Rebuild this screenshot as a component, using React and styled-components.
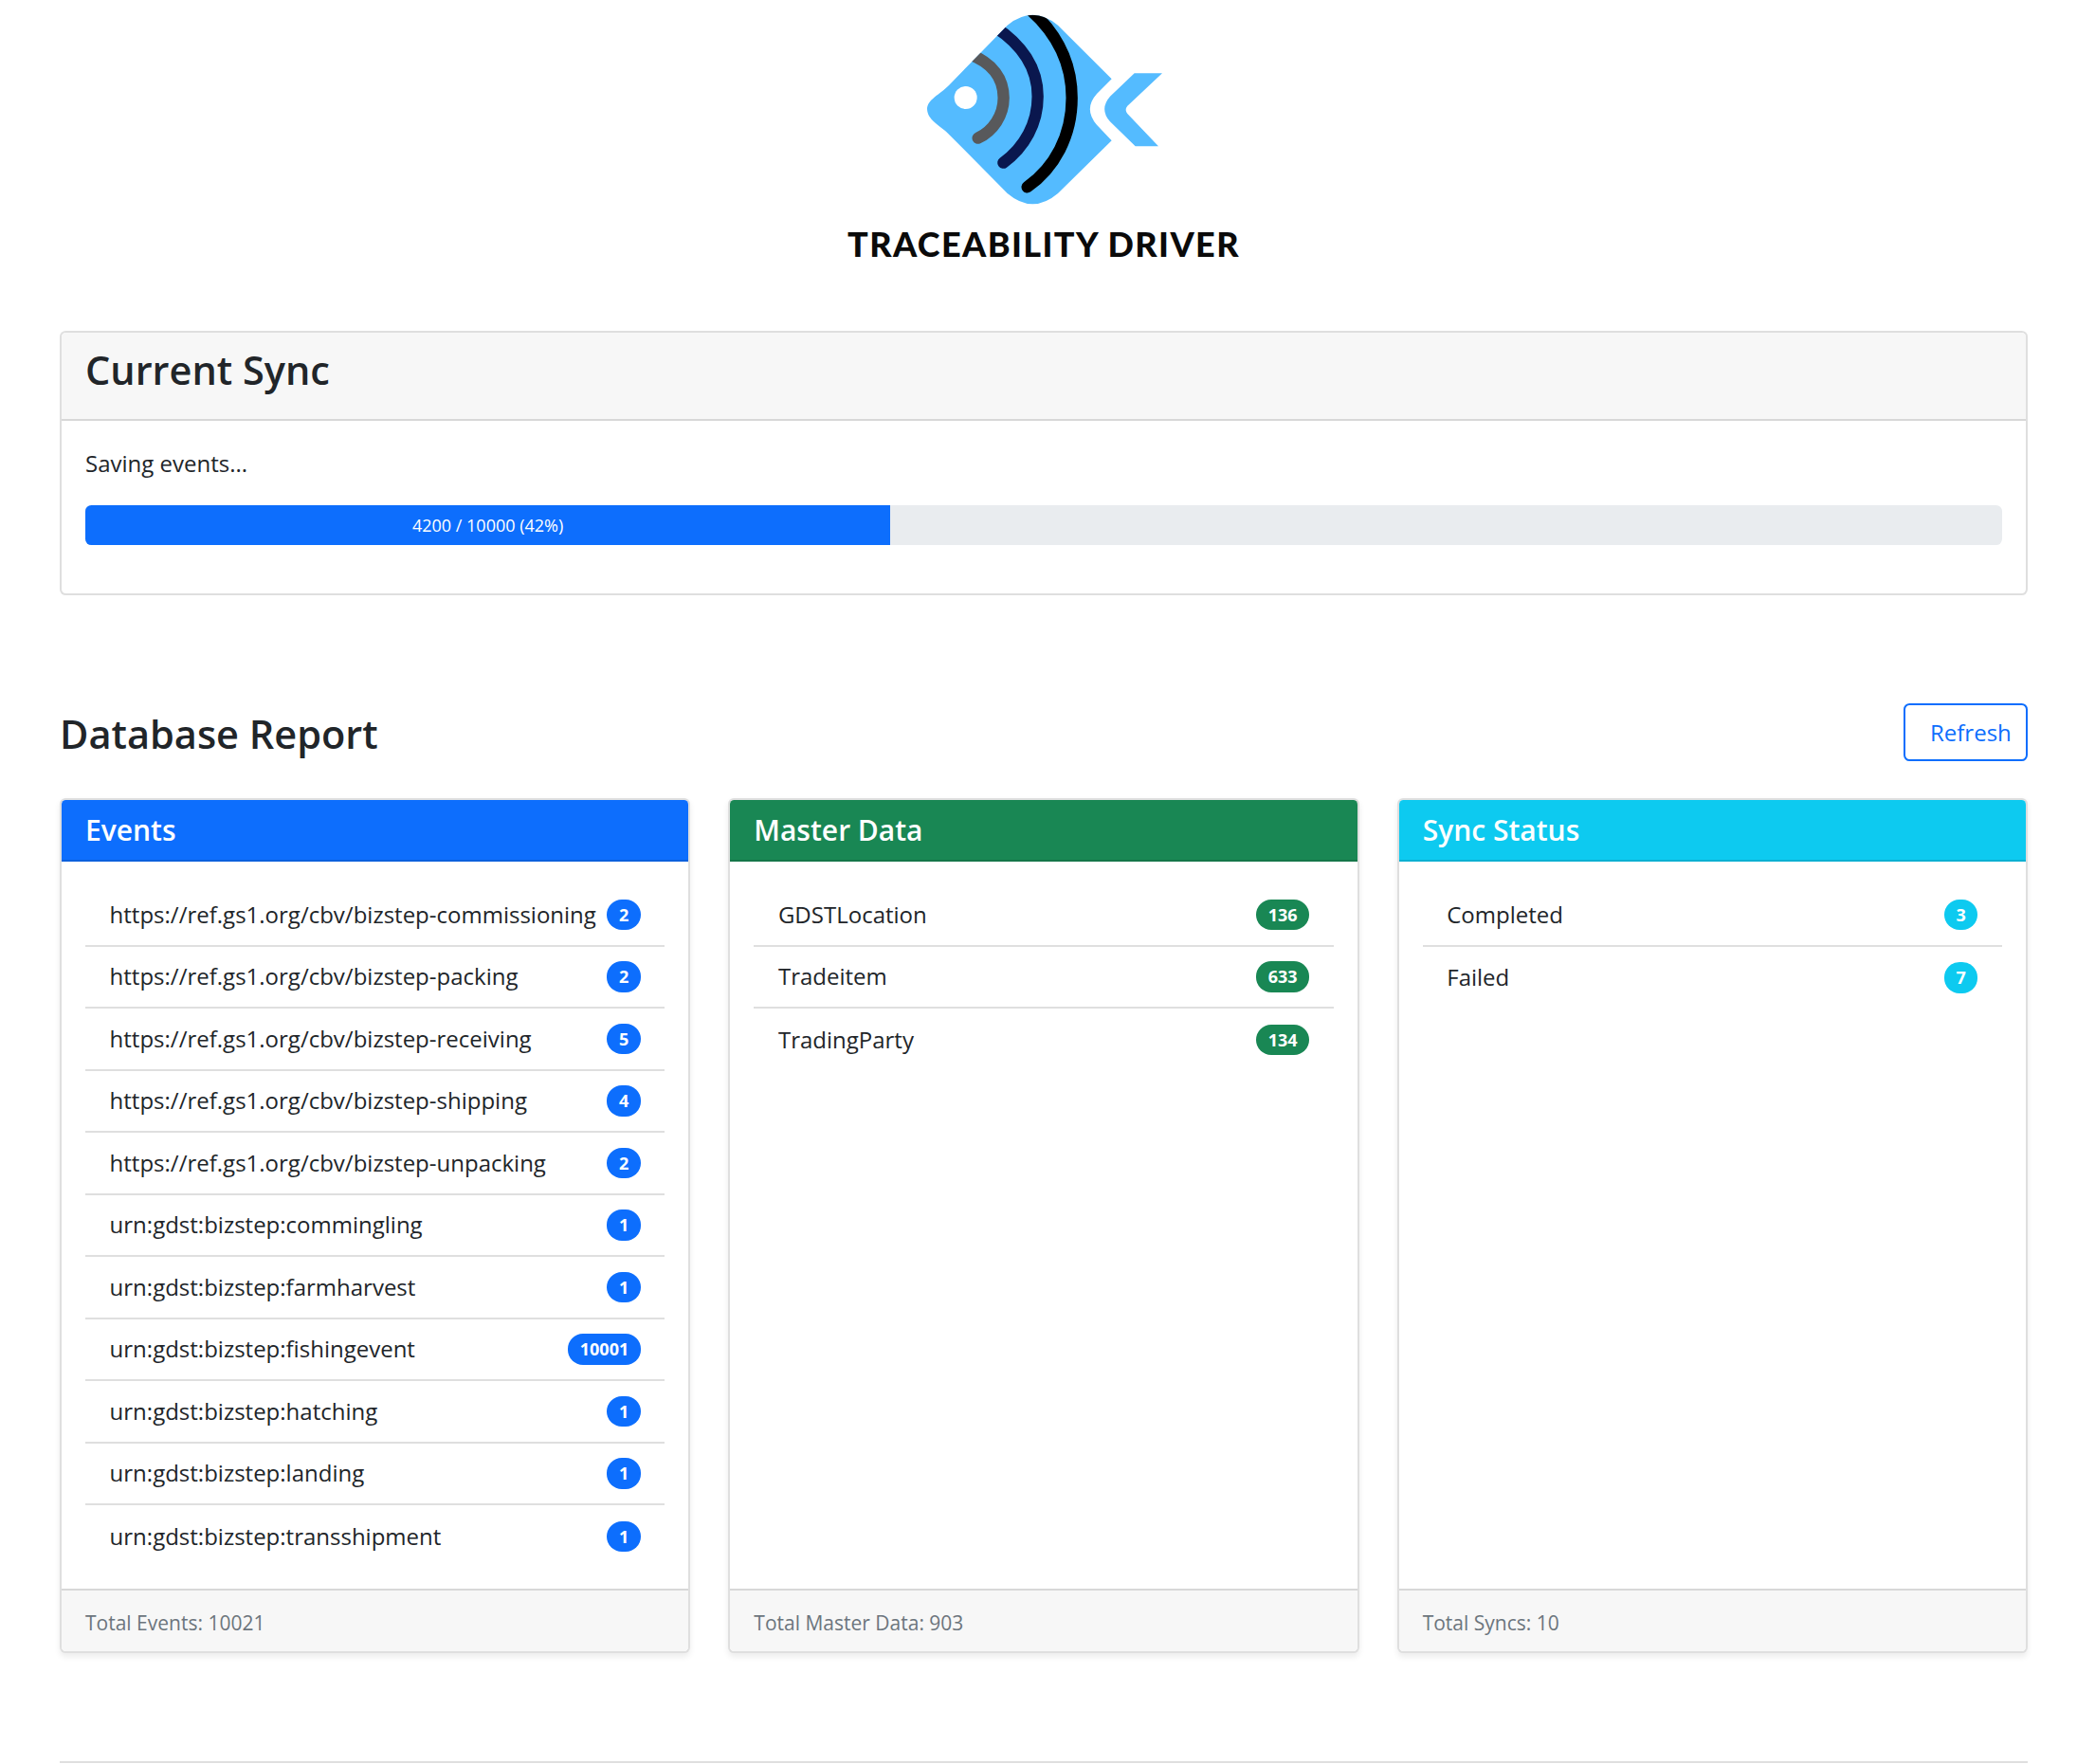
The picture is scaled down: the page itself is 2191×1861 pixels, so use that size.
import React from 'react';
import styled, { createGlobalStyle } from 'styled-components';

const GlobalStyle = createGlobalStyle`
  html, body {
    margin: 0;
    padding: 0;
    background: #fff;
    color: #212529;
    font-family: "Open Sans", "Liberation Sans", sans-serif;
    font-size: 24px;
    line-height: 38.4px;
  }
  * { box-sizing: border-box; }
`;

const Page = styled.div`
  padding: 0 52px 0 63px;
`;

// ******************* LOGO **********************
const LogoBlock = styled.header`
  display: flex;
  flex-direction: column;
  align-items: center;
  margin-bottom: 65px;
`;

const LogoMark = styled.svg`
  display: block;
  width: 440px;
  height: 230px;
`;

const LogoWord = styled.div`
  font-family: Lato, "Liberation Sans", sans-serif;
  font-weight: 900;
  font-size: 36px;
  line-height: 54px;
  letter-spacing: 1.4px;
  color: #0a0a0a;
`;

// ******************* CARDS **********************
const Card = styled.section`
  display: flex;
  flex-direction: column;
  background: #fff;
  border: 2px solid rgba(0, 0, 0, 0.125);
  border-radius: 6.4px;
  box-shadow: ${(p) => (p.$raised ? '0 3.2px 6.4px rgba(0, 0, 0, 0.075)' : 'none')};
  overflow: hidden;
`;

const SyncHeader = styled.div`
  background: #f7f7f7;
  border-bottom: 2px solid rgba(0, 0, 0, 0.125);
  padding: 12.8px 25px 11.8px;
`;

const SyncTitle = styled.h3`
  margin: 0 0 12.8px;
  font-size: 41.5px;
  line-height: 53.8px;
  font-weight: 600;
`;

const SyncBody = styled.div`
  padding: 25.6px 25px 51.2px;
`;

const SyncText = styled.p`
  margin: 0 0 25px;
`;

const Progress = styled.div`
  display: flex;
  height: 42px;
  background: #e9ecef;
  border-radius: 6.4px;
  overflow: hidden;
`;

const ProgressFill = styled.div`
  display: flex;
  align-items: center;
  justify-content: center;
  background: #0d6efd;
  color: #fff;
  font-size: 18px;
`;

// ******************* REPORT **********************
const ReportHead = styled.div`
  display: flex;
  justify-content: space-between;
  align-items: center;
  margin: 114px 0 39px;
`;

const ReportTitle = styled.h2`
  margin: 0;
  padding-top: 4px;
  font-size: 41.5px;
  line-height: 57px;
  font-weight: 600;
`;

const RefreshButton = styled.button`
  height: 61px;
  width: 131px;
  padding: 0 20px 0 26px;
  background: #fff;
  color: #0d6efd;
  border: 2px solid #0d6efd;
  border-radius: 6.4px;
  font: inherit;
  white-space: nowrap;
`;

const Columns = styled.div`
  display: grid;
  grid-template-columns: repeat(3, 1fr);
  gap: 40px;
`;

const ColumnHeader = styled.div`
  background: ${(p) => p.$color};
  color: #fff;
  border-bottom: 2px solid rgba(0, 0, 0, 0.125);
  padding: 12.8px 25px 11.8px;
  font-size: 30px;
  line-height: 38.4px;
  font-weight: 600;
`;

const ColumnBody = styled.div`
  flex: 1;
  padding: 24px 25px 22px;
`;

const List = styled.ul`
  list-style: none;
  margin: 0;
  padding: 0;
`;

const Row = styled.li`
  display: flex;
  justify-content: space-between;
  align-items: center;
  height: 65.5px;
  padding: 0 25.6px;
  border-bottom: 2px solid rgba(0, 0, 0, 0.125);
  white-space: nowrap;

  &:last-child {
    border-bottom: 0;
  }
`;

const Badge = styled.span`
  display: inline-block;
  background: ${(p) => p.$color};
  color: #fff;
  font-size: 18px;
  font-weight: 700;
  line-height: 19.2px;
  padding: 6.7px 12.5px;
  border-radius: 16px;
`;

const ColumnFooter = styled.div`
  background: #f7f7f7;
  border-top: 2px solid rgba(0, 0, 0, 0.125);
  padding: 15px 25px 10.6px;
  color: #6c757d;
  font-size: 21px;
`;

const Rule = styled.hr`
  margin: 114px 0 0;
  border: 0;
  border-top: 2px solid rgba(0, 0, 0, 0.125);
`;

const columns = [
  {
    title: 'Events',
    color: '#0d6efd',
    total: 'Total Events: 10021',
    rows: [
      ['https://ref.gs1.org/cbv/bizstep-commissioning', 2],
      ['https://ref.gs1.org/cbv/bizstep-packing', 2],
      ['https://ref.gs1.org/cbv/bizstep-receiving', 5],
      ['https://ref.gs1.org/cbv/bizstep-shipping', 4],
      ['https://ref.gs1.org/cbv/bizstep-unpacking', 2],
      ['urn:gdst:bizstep:commingling', 1],
      ['urn:gdst:bizstep:farmharvest', 1],
      ['urn:gdst:bizstep:fishingevent', 10001],
      ['urn:gdst:bizstep:hatching', 1],
      ['urn:gdst:bizstep:landing', 1],
      ['urn:gdst:bizstep:transshipment', 1],
    ],
  },
  {
    title: 'Master Data',
    color: '#198754',
    total: 'Total Master Data: 903',
    rows: [
      ['GDSTLocation', 136],
      ['Tradeitem', 633],
      ['TradingParty', 134],
    ],
  },
  {
    title: 'Sync Status',
    color: '#0dcaf0',
    total: 'Total Syncs: 10',
    rows: [
      ['Completed', 3],
      ['Failed', 7],
    ],
  },
];

const FISH_BODY =
  'M545 80 Q625 15 705 80 L875 250 L828 297 Q785 345 828 395 L875 445 L705 612 Q625 680 545 612 L360 425 C330 395 292 380 291 345 C292 315 330 300 360 270 Z';

function Logo() {
  return (
    <LogoMark viewBox="0 0 1320 690">
      <defs>
        <clipPath id="fish-body">
          <path d={FISH_BODY} />
        </clipPath>
      </defs>
      <path d={FISH_BODY} fill="#54bbff" />
      <path
        d="M947 232 L1035 232 L925 335 Q915 347 925 360 L1023 463 L950 463 L870 385 Q835 345 870 305 Z"
        fill="#54bbff"
      />
      <circle cx="413" cy="309" r="36" fill="#fff" />
      <g clipPath="url(#fish-body)" fill="none" strokeWidth="37" strokeLinecap="round">
        <path d="M425 172 C500 200 533 250 533 310 C533 365 500 415 452 437" stroke="#58595b" />
        <path d="M505 85 C590 140 641 215 641 305 C641 390 600 465 532 515" stroke="#0a174e" />
        <path d="M605 20 C700 100 749 200 749 310 C749 430 695 530 608 592" stroke="#000" />
      </g>
    </LogoMark>
  );
}

function App() {
  return (
    <Page>
      <GlobalStyle />
      <LogoBlock>
        <Logo />
        <LogoWord>TRACEABILITY DRIVER</LogoWord>
      </LogoBlock>

      <Card>
        <SyncHeader>
          <SyncTitle>Current Sync</SyncTitle>
        </SyncHeader>
        <SyncBody>
          <SyncText>Saving events...</SyncText>
          <Progress>
            <ProgressFill style={{ width: '42%' }}>4200 / 10000 (42%)</ProgressFill>
          </Progress>
        </SyncBody>
      </Card>

      <ReportHead>
        <ReportTitle>Database Report</ReportTitle>
        <RefreshButton>Refresh</RefreshButton>
      </ReportHead>

      <Columns>
        {columns.map((col) => (
          <Card $raised key={col.title}>
            <ColumnHeader $color={col.color}>{col.title}</ColumnHeader>
            <ColumnBody>
              <List>
                {col.rows.map(([label, count]) => (
                  <Row key={label}>
                    {label}
                    <Badge $color={col.color}>{count}</Badge>
                  </Row>
                ))}
              </List>
            </ColumnBody>
            <ColumnFooter>{col.total}</ColumnFooter>
          </Card>
        ))}
      </Columns>

      <Rule />
    </Page>
  );
}

export default App;
